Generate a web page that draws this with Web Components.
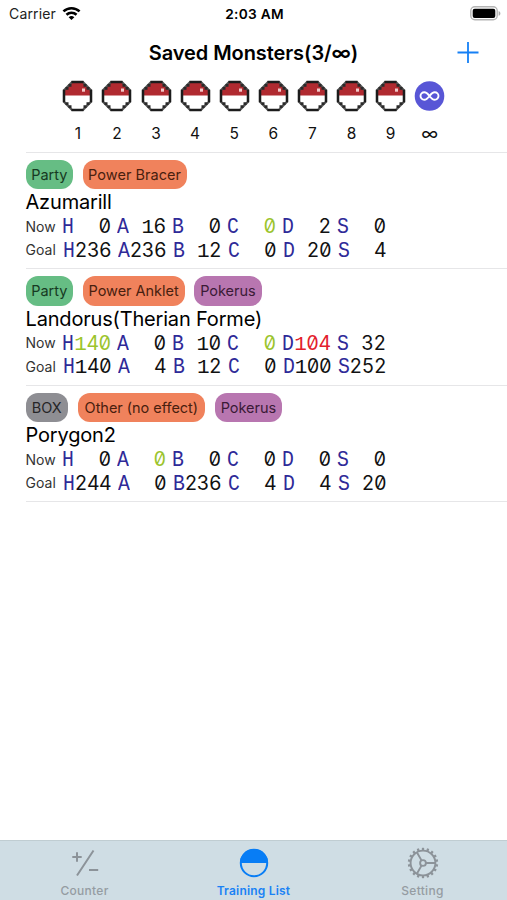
<!DOCTYPE html>
<html lang="en">
<head>
<meta charset="utf-8">
<title>Saved Monsters</title>
<style>
html,body{margin:0;height:100%;background:#fff}
body{font-family:Inter,"Liberation Sans",sans-serif;color:#000;overflow:hidden}
</style>
</head>
<body>
<monster-app></monster-app>
<script>
function define(name, css, html) {
  customElements.define(name, class extends HTMLElement {
    connectedCallback() {
      if (this.shadowRoot) return;
      const root = this.attachShadow({ mode: 'open' });
      root.innerHTML = '<style>' + css + '</style>' + (typeof html === 'function' ? html(this) : html);
    }
  });
}

define('status-bar', `
:host{display:grid;grid-template-columns:1fr auto 1fr;align-items:center;height:27px;padding:0 6px 0 9px;box-sizing:border-box;font-size:14px}
.left{display:flex;align-items:center;gap:6px;color:#222;letter-spacing:.15px}
.time{font-weight:600;font-size:13.7px;letter-spacing:.28px;padding-right:1px}
.batt{justify-self:end;display:block}
svg{display:block}
`, `
<div class="left"><span>Carrier</span>
<svg width="19" height="15" viewBox="0 0 20 15" fill="none" stroke="#000" stroke-width="2.7"><path d="M1.500 5.300a12.400 12.400 0 0 1 17 0"/><path d="M4.700 8.800a7.700 7.700 0 0 1 10.600 0"/><path d="M10 14.400 7 11.500a4.300 4.300 0 0 1 6 0z" fill="#000" stroke="none"/></svg></div>
<span class="time">2:03 AM</span>
<svg class="batt" width="31" height="15" viewBox="0 0 31 15"><rect x=".8" y=".8" width="26.400" height="13" rx="4" fill="#fff" stroke="#b4b4b4" stroke-width="1.400"/><rect x="2.700" y="2.700" width="22.600" height="9.200" rx="2" fill="#000"/><path d="M28.600 5c2.400.8 2.400 4 0 4.800z" fill="#aaa"/></svg>
`);

define('nav-bar', `
:host{display:grid;grid-template-columns:1fr auto 1fr;align-items:center;height:51px;padding:0 27px;box-sizing:border-box}
h1{grid-column:2;margin:0;font-size:20px;font-weight:600;letter-spacing:-.08px;line-height:24px}
svg{justify-self:end;display:block}
`, `<h1><slot></slot></h1><svg width="24" height="24" viewBox="0 0 24 24" stroke="#1680f5" stroke-width="1.8"><path d="M1.500 11.500h21M12 1v21"/></svg>`);

define('ball-item', `
:host{display:flex;flex-direction:column;align-items:center;width:39.1px;font-size:15.500px;color:#111}
:host([all]) span{font-size:18px}
svg{display:block}
span{line-height:20px;margin-top:12px}
`, el => (el.hasAttribute('all') ? `
<svg width="31" height="32" viewBox="0 0 31 32"><circle cx="15.500" cy="16" r="14.800" fill="#5856d6"/><path d="M15.500 16c-1.800-2.400-3.200-3.800-5.200-3.800a3.800 3.800 0 0 0 0 7.600c2 0 3.400-1.400 5.200-3.800s3.200-3.800 5.200-3.800a3.800 3.800 0 0 1 0 7.600c-2 0-3.400-1.400-5.200-3.800z" fill="none" stroke="#fff" stroke-width="1.900"/></svg>` : `
<svg width="31" height="32" viewBox="0 0 31 32"><path d="M10 2H21L29 10.300V21.700L21 30H10L2 21.700V10.300z" fill="#fff"/><path d="M10 2h11l8 8.300V15.500H2V10.300z" fill="#b02a30"/><path d="M10 2h11l8 8.300v11.400L21 30H10l-8-8.300V10.300z" fill="none" stroke="#555" stroke-width="2.200"/><path d="M9.500 2h12M9.500 30h12M2 9.800v12.400M29 9.800v12.400" stroke="#1c1c1c" stroke-width="2.400"/><path d="M6.500 3.900h3v2.800h-3zM3.500 6.900h3v2.800h-3zM21.500 3.900h3v2.800h-3zM24.500 6.900h3v2.800h-3zM6.500 25.300h3v2.800h-3zM3.500 22.300h3v2.800h-3zM21.500 25.300h3v2.800h-3zM24.500 22.300h3v2.800h-3z" fill="#2a2a2a"/><path d="M20 8.500h3v3.200h-3z" fill="#f3c9c9"/></svg>`) + '<span><slot></slot></span>');

define('box-strip', `
:host{display:flex;justify-content:center;height:74px;padding:2px 0 0 .5px;box-sizing:border-box}
`, '<slot></slot>');

define('tag-pill', `
:host{display:block;box-sizing:border-box;height:29.500px;line-height:29px;border-radius:12px;text-align:center;font-size:14.500px;white-space:nowrap;letter-spacing:-.03px}
:host([kind=party]){background:#66bd84;color:#173922;width:47.500px}
:host([kind=box]){background:#8e8e93;color:#252527;width:42.500px}
:host([kind=item]){background:#f0825c;color:#48200f}
:host([kind=virus]){background:#b876b0;color:#3a1a36;width:67.500px}
`, '<slot></slot>');

define('stat-line', `
:host{display:flex;align-items:center;height:23.400px}
.label{font-size:14px;width:36.700px;color:#333;letter-spacing:.05px}
:host([label=Goal]) .label{width:37.200px}
.cell{display:flex;justify-content:space-between;align-items:baseline;width:48.800px;margin-right:6.200px;padding-top:2px;font-size:20px;line-height:23px}
.k{font-family:"Liberation Mono",monospace;color:#2f2a98;font-size:21.500px;width:12.200px;transform:scaleX(.92);transform-origin:0 50%}
.v{display:flex;align-items:baseline;color:#111}
.v i{font-style:normal;width:12.200px;display:flex;justify-content:center;font-size:19.500px;font-feature-settings:"zero" 1,"tnum" 1}
.v i.one{font-family:"Liberation Mono",monospace;font-size:21px}
.v.g{color:#9bc42c}.v.r{color:#e3202c}
`, el => {
  const vals = el.getAttribute('values').split(' ');
  return `<span class="label">${el.getAttribute('label')}</span>` + vals.map((v, i) => {
    const num = v.replace(/\D/g, ''), tone = v.replace(/\d/g, '');
    return `<span class="cell"><span class="k">${'HABCDS'[i]}</span><span class="v ${tone}">${[...num].map(d => `<i${d === '1' ? ' class="one"' : ''}>${d}</i>`).join('')}</span></span>`;
  }).join('');
});

define('monster-row', `
:host{display:block;height:116.400px;box-sizing:border-box;margin-left:25.500px;padding-top:6.800px;border-top:1px solid #e6e6e8}
.tags{display:flex;gap:9.600px}
.name{font-size:20px;line-height:26.500px;height:25.400px;letter-spacing:-.18px}
`, el => `<div class="tags"><slot></slot></div><div class="name">${el.getAttribute('name')}</div>
<stat-line label="Now" values="${el.getAttribute('now')}"></stat-line><stat-line label="Goal" values="${el.getAttribute('goal')}"></stat-line>`);

define('tab-item', `
:host{display:flex;flex-direction:column;align-items:center;flex:1;color:#959ca2;font-size:12px;font-weight:500;letter-spacing:.3px;padding-top:6px}
:host([active]){color:#1a82f5;font-weight:600;letter-spacing:.2px}
span{line-height:16px;margin-top:4px}
`, '<slot name="icon"></slot><span><slot></slot></span>');

define('tab-bar', `
:host{display:flex;height:60px;box-sizing:border-box;background:#cfdde4;border-top:1px solid #c0cdd2}
svg{display:block}
`, () => {
  let teeth = '';
  for (let a = 0; a < 360; a += 20) teeth += `<path d="M16 3.500V.8" stroke-width="2.300" transform="rotate(${a} 16 16)"/>`;
  return `
<tab-item><svg slot="icon" width="32" height="32" viewBox="0 0 32 32" fill="none" stroke="#8c9399" stroke-width="2"><path d="M24.500 3.500 8 28.500M3.300 10h9.400M8 5.300v9.400M20 23h9.200"/></svg>Counter</tab-item>
<tab-item active><svg slot="icon" width="32" height="32" viewBox="0 0 32 32"><circle cx="16" cy="16" r="13.200" fill="none" stroke="#087df5" stroke-width="2"/><path d="M2 16a14 14 0 0 1 28 0z" fill="#087df5"/></svg>Training List</tab-item>
<tab-item><svg slot="icon" width="32" height="32" viewBox="0 0 32 32" fill="none" stroke="#8c9399" stroke-width="1.900">${teeth}<circle cx="16" cy="16" r="12.400"/><circle cx="16" cy="16" r="2.900"/><path d="M19 16h9M14.500 13.400 10 5.500M14.500 18.600 10 26.500"/></svg>Setting</tab-item>`;
});

define('monster-app', `
:host{display:flex;flex-direction:column;height:900px;width:507px}
main{flex:1}
.end{margin-left:25.500px;height:1px;background:#e6e6e8}
`, `
<status-bar></status-bar>
<nav-bar>Saved Monsters(3/∞)</nav-bar>
<box-strip>${[1,2,3,4,5,6,7,8,9].map(n => `<ball-item>${n}</ball-item>`).join('')}<ball-item all>∞</ball-item></box-strip>
<main>
<monster-row name="Azumarill" now="0 16 0 0g 2 0" goal="236 236 12 0 20 4"><tag-pill kind="party">Party</tag-pill><tag-pill kind="item" style="width:104px;letter-spacing:.04px">Power Bracer</tag-pill></monster-row>
<monster-row name="Landorus(Therian Forme)" now="140g 0 10 0g 104r 32" goal="140 4 12 0 100 252"><tag-pill kind="party">Party</tag-pill><tag-pill kind="item" style="width:102px">Power Anklet</tag-pill><tag-pill kind="virus">Pokerus</tag-pill></monster-row>
<monster-row name="Porygon2" now="0 0g 0 0 0 0" goal="244 0 236 4 4 20"><tag-pill kind="box">BOX</tag-pill><tag-pill kind="item" style="width:127.500px">Other (no effect)</tag-pill><tag-pill kind="virus">Pokerus</tag-pill></monster-row>
<div class="end"></div>
</main>
<tab-bar></tab-bar>`);
</script>
</body>
</html>
